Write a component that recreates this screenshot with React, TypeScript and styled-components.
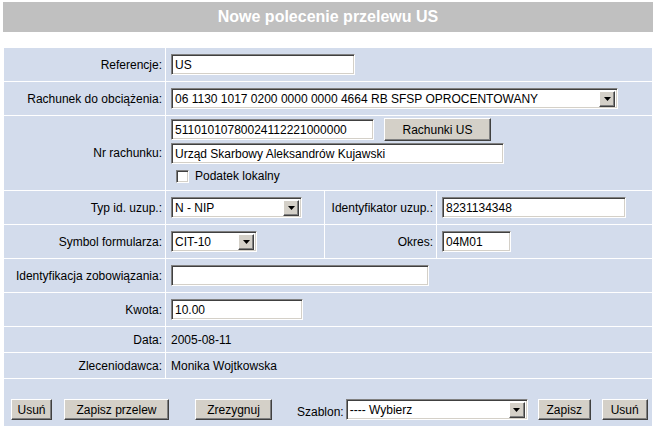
import React from "react";
import styled, { createGlobalStyle } from "styled-components";

const GlobalStyle = createGlobalStyle`
  body {
    margin: 0;
    background: #ffffff;
    font-family: "Liberation Sans", Arial, sans-serif;
    font-size: 12px;
    color: #000000;
  }
`;

const Page = styled.div`
  width: 659px;
  padding-top: 2px;
`;

const Header = styled.div`
  margin: 0 6px 0 3px;
  height: 30px;
  background: #c0c0c0;
  color: #ffffff;
  font-weight: 700;
  font-size: 16px;
  display: flex;
  align-items: center;
  justify-content: center;
`;

// form grid
const Form = styled.div`
  margin: 16px 0 0 4px;
  width: 648px;
  display: grid;
  grid-template-columns: 161px 158px 111px 215px;
  grid-template-rows: 33px 33px 74px 33px 33px 33px 33px 25px 25px 47px;
  gap: 1px;
  background: #ffffff;
`;

const Cell = styled.div<{ $span?: number; $right?: boolean; $top?: boolean }>`
  background: #d3dcec;
  display: flex;
  align-items: ${(p) => (p.$top ? "flex-start" : "center")};
  justify-content: ${(p) => (p.$right ? "flex-end" : "flex-start")};
  padding: ${(p) => (p.$right ? "0 3px 0 0" : "0 0 0 5px")};
  grid-column: span ${(p) => p.$span || 1};
  white-space: nowrap;
`;

const Stack = styled.div`
  display: flex;
  flex-direction: column;
  padding-top: 2px;
`;

const Line = styled.div`
  display: flex;
  align-items: center;
  gap: 10px;
  margin-bottom: 2px;
`;

const Input = styled.div<{ $w: number }>`
  box-sizing: border-box;
  width: ${(p) => p.$w}px;
  height: 21px;
  background: #ffffff;
  border: 1px solid;
  border-color: #808080 #ffffff #ffffff #808080;
  box-shadow: inset 1px 1px 0 #404040, inset -1px -1px 0 #d4d0c8;
  padding: 0 3px;
  display: flex;
  align-items: center;
  overflow: hidden;
`;

const SelectBox = styled(Input)`
  padding: 0 2px 0 3px;
  justify-content: space-between;
`;

const SelectArrow = styled.span`
  box-sizing: border-box;
  width: 16px;
  height: 16px;
  background: #d4d0c8;
  border: 1px solid;
  border-color: #ffffff #404040 #404040 #ffffff;
  box-shadow: inset -1px -1px 0 #808080;
  display: flex;
  align-items: center;
  justify-content: center;
`;

const Button = styled.button<{ $w: number; $h?: number }>`
  box-sizing: border-box;
  width: ${(p) => p.$w}px;
  height: ${(p) => p.$h || 21}px;
  font-family: "Liberation Sans", Arial, sans-serif;
  font-size: 12px;
  color: #000000;
  background: #d4d0c8;
  border: 1px solid;
  border-color: #ffffff #404040 #404040 #ffffff;
  box-shadow: inset -1px -1px 0 #808080;
  padding: 0;
`;

const Check = styled.span`
  box-sizing: border-box;
  width: 13px;
  height: 13px;
  background: #ffffff;
  border: 1px solid;
  border-color: #808080 #ffffff #ffffff #808080;
  box-shadow: inset 1px 1px 0 #404040, inset -1px -1px 0 #d4d0c8;
`;

const CheckLine = styled.label`
  display: flex;
  align-items: center;
  gap: 6px;
  padding-left: 5px;
  margin-top: 5px;
  height: 14px;
`;

const Actions = styled.div`
  background: #d3dcec;
  grid-column: span 4;
  display: flex;
  align-items: flex-end;
  padding: 0 0 6px 7px;
`;

const Gap = styled.span<{ $w: number }>`
  width: ${(p) => p.$w}px;
  flex: none;
`;

const TemplateLabel = styled.span`
  margin-right: 2px;
  line-height: 16px;
`;

const Arrow = () => (
  <svg width="7" height="4" viewBox="0 0 7 4">
    <path d="M0 0h7L3.5 4z" fill="#000" />
  </svg>
);

const Select = ({ w, value }: { w: number; value: string }) => (
  <SelectBox $w={w}>
    <span>{value}</span>
    <SelectArrow>
      <Arrow />
    </SelectArrow>
  </SelectBox>
);

export default function App() {
  return (
    <Page>
      <GlobalStyle />
      <Header>Nowe polecenie przelewu US</Header>
      <Form>
        <Cell $right>Referencje:</Cell>
        <Cell $span={3}>
          <Input $w={184}>US</Input>
        </Cell>

        <Cell $right>Rachunek do obciążenia:</Cell>
        <Cell $span={3}>
          <Select w={447} value="06 1130 1017 0200 0000 0000 4664 RB SFSP OPROCENTOWANY" />
        </Cell>

        <Cell $right>Nr rachunku:</Cell>
        <Cell $span={3} $top>
          <Stack>
            <Line>
              <Input $w={203}>51101010780024112221000000</Input>
              <Button $w={107} $h={23}>Rachunki US</Button>
            </Line>
            <Input $w={333}>Urząd Skarbowy Aleksandrów Kujawski</Input>
            <CheckLine>
              <Check />
              Podatek lokalny
            </CheckLine>
          </Stack>
        </Cell>

        <Cell $right>Typ id. uzup.:</Cell>
        <Cell>
          <Select w={131} value="N - NIP" />
        </Cell>
        <Cell $right>Identyfikator uzup.:</Cell>
        <Cell>
          <Input $w={184}>8231134348</Input>
        </Cell>

        <Cell $right>Symbol formularza:</Cell>
        <Cell>
          <Select w={86} value="CIT-10" />
        </Cell>
        <Cell $right>Okres:</Cell>
        <Cell>
          <Input $w={69}>04M01</Input>
        </Cell>

        <Cell $right>Identyfikacja zobowiązania:</Cell>
        <Cell $span={3}>
          <Input $w={258} />
        </Cell>

        <Cell $right>Kwota:</Cell>
        <Cell $span={3}>
          <Input $w={132}>10.00</Input>
        </Cell>

        <Cell $right>Data:</Cell>
        <Cell $span={3}>2005-08-11</Cell>

        <Cell $right>Zleceniodawca:</Cell>
        <Cell $span={3}>Monika Wojtkowska</Cell>

        <Actions>
          <Button $w={41}>Usuń</Button>
          <Gap $w={12} />
          <Button $w={105}>Zapisz przelew</Button>
          <Gap $w={26} />
          <Button $w={77}>Zrezygnuj</Button>
          <Gap $w={25} />
          <TemplateLabel>Szablon:</TemplateLabel>
          <Select w={182} value="---- Wybierz" />
          <Gap $w={10} />
          <Button $w={53}>Zapisz</Button>
          <Gap $w={11} />
          <Button $w={46}>Usuń</Button>
        </Actions>
      </Form>
    </Page>
  );
}
